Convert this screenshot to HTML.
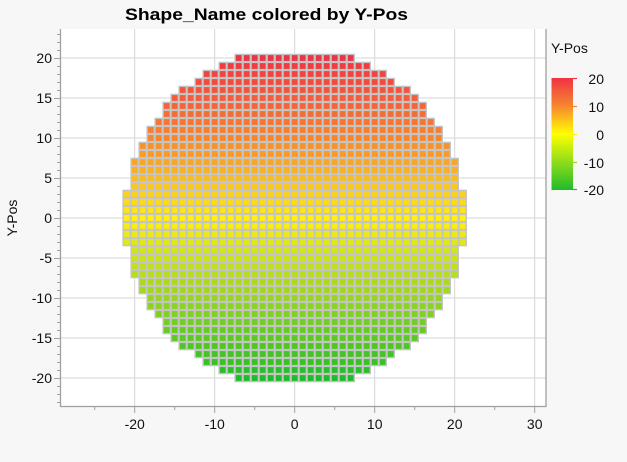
<!DOCTYPE html>
<html><head><meta charset="utf-8"><style>
html,body{margin:0;padding:0;background:#f7f7f7;}
svg{display:block;font-family:"Liberation Sans","DejaVu Sans",sans-serif;}
</style></head><body>
<svg id="s" width="627" height="462" xmlns="http://www.w3.org/2000/svg">
<defs><linearGradient id="lg" x1="0" y1="0" x2="0" y2="1">
<stop offset="0" stop-color="#ef3345"/><stop offset="0.25" stop-color="#f7862f"/><stop offset="0.5" stop-color="#ffff00"/><stop offset="0.75" stop-color="#8fdc1a"/><stop offset="1" stop-color="#1fbb2a"/></linearGradient></defs>
<rect x="60.5" y="29" width="485.5" height="377.5" fill="#fff"/>
<g id="grid" stroke="#d6d6d6" stroke-width="1"></g>
<g id="cells" stroke="#c4c4c4" stroke-width="1.4"></g>
<path d="M60.5 29V406.5H546V29" fill="none" stroke="#a0a0a0" stroke-width="1.3"/>
<g id="ticks" stroke="#a0a0a0" stroke-width="1"></g>
<g id="lab" font-size="14" fill="#111"></g>
<text x="125" y="20" font-size="17" font-weight="bold" textLength="283" lengthAdjust="spacingAndGlyphs" fill="#000">Shape_Name colored by Y-Pos</text>
<text transform="translate(17,218) rotate(-90)" font-size="14" text-anchor="middle" fill="#111">Y-Pos</text>
<text x="551" y="53" font-size="14" fill="#111">Y-Pos</text>
<rect x="551.5" y="78" width="21.5" height="112" fill="url(#lg)"/>
<g stroke-width="1.2"><line x1="573" y1="78.5" x2="577" y2="78.5" stroke="#ef3345"/><line x1="573" y1="106.5" x2="577" y2="106.5" stroke="#f7862f"/><line x1="573" y1="134.5" x2="577" y2="134.5" stroke="#ffee00"/><line x1="573" y1="162.5" x2="577" y2="162.5" stroke="#8fdc1a"/><line x1="573" y1="189.5" x2="577" y2="189.5" stroke="#1fbb2a"/></g>
<g font-size="14" fill="#111" text-anchor="end"><text x="604" y="84">20</text><text x="604" y="112">10</text><text x="604" y="140">0</text><text x="604" y="168">-10</text><text x="604" y="195">-20</text></g>
</svg>
<script>
var NS="http://www.w3.org/2000/svg",X0=294.7,Y0=218,U=8;
function el(p,t,a,txt){var e=document.createElementNS(NS,t);for(var k in a)e.setAttribute(k,a[k]);if(txt!=null)e.textContent=txt;document.getElementById(p).appendChild(e);}
for(var x=-20;x<=30;x+=10){var px=X0+x*U;el("grid","line",{x1:px,y1:29,x2:px,y2:406});el("lab","text",{x:px,y:429,"text-anchor":"middle"},String(x));}
for(var y=-20;y<=20;y+=5){var py=Y0-y*U;el("grid","line",{x1:61,y1:py,x2:546,y2:py});el("lab","text",{x:52,y:py+5,"text-anchor":"end"},String(y));}
for(var x=-25;x<=30;x+=5){var px=X0+x*U;el("ticks","line",{x1:px,y1:406.5,x2:px,y2:x%10==0?413:410});}
for(var y=-23;y<=23;y++){var py=Y0-y*U+0.5;el("ticks","line",{x1:60.5,y1:py,x2:y%5==0?54:57,y2:py});}
var st=[[20,[239,51,69]],[10,[246,134,47]],[0,[255,240,20]],[-10,[150,214,30]],[-20,[31,187,42]]];
function col(y){for(var i=0;i<4;i++){var a=st[i],b=st[i+1];if(y<=a[0]&&y>=b[0]){var t=(a[0]-y)/10;return "rgb("+a[1].map(function(v,j){return Math.round(v+(b[1][j]-v)*t)}).join(",")+")";}}}
for(var y=-20;y<=20;y++)for(var x=-22;x<=22;x++){if(x*x+y*y<=455){el("cells","rect",{x:X0+x*U-3.6,y:Y0-y*U-3.6,width:7.2,height:7.2,fill:col(y)});}}
</script>
</body></html>
